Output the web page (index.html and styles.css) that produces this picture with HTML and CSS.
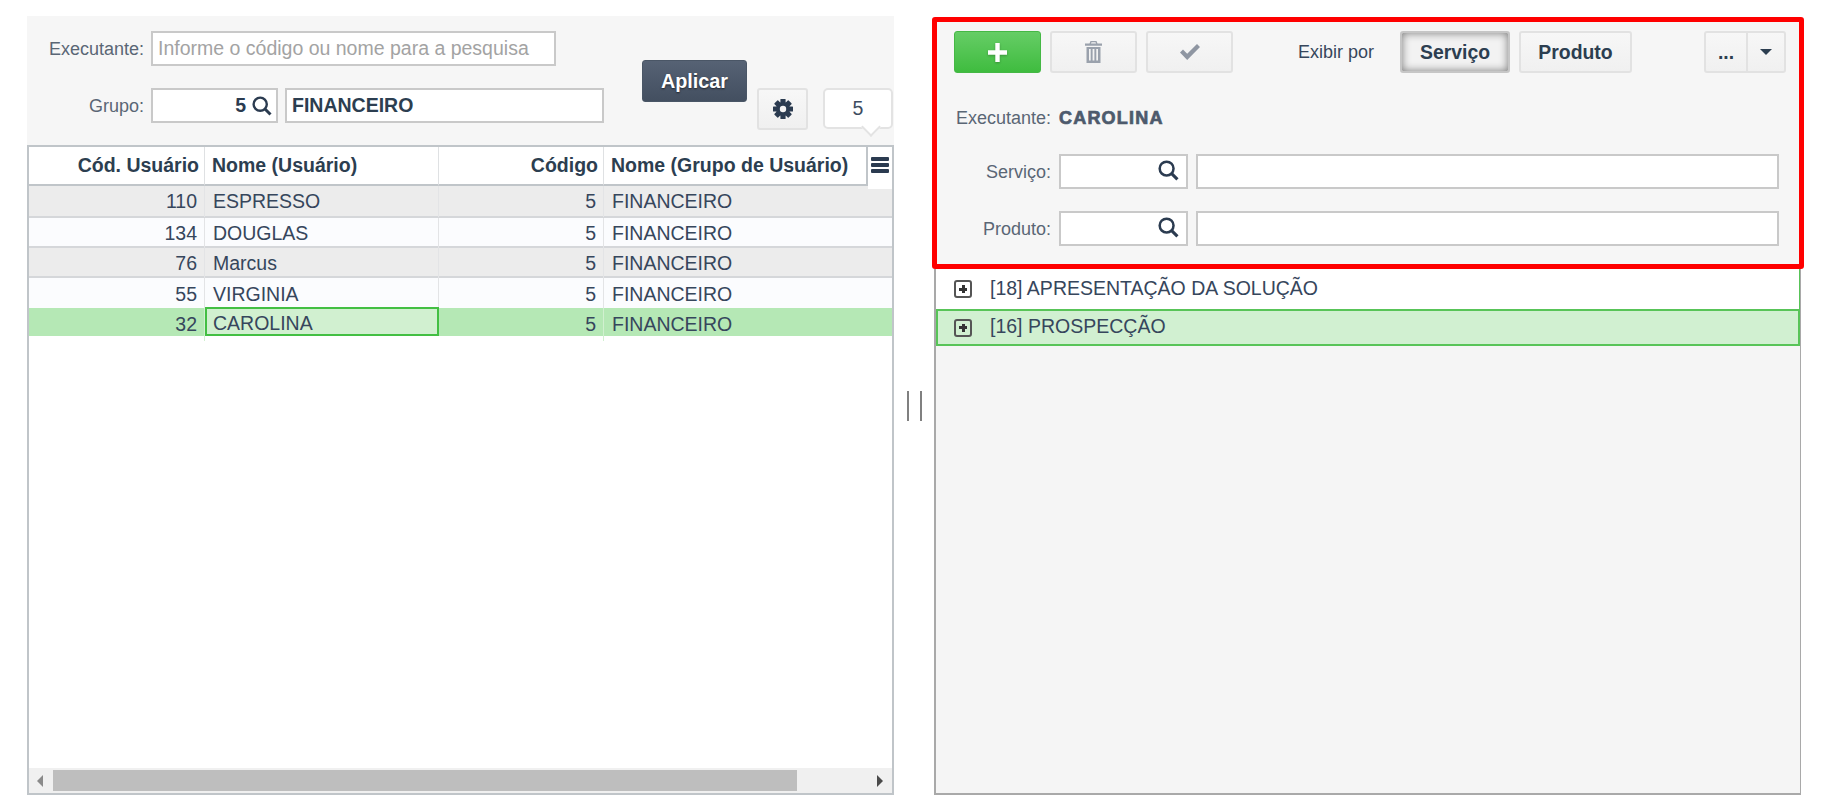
FILE: index.html
```html
<!DOCTYPE html>
<html lang="pt-BR">
<head>
<meta charset="utf-8">
<title>Executantes</title>
<link rel="stylesheet" href="styles.css">
</head>
<body>
<svg class="defs" width="0" height="0" aria-hidden="true">
  <symbol id="search" viewBox="0 0 20 20"><circle cx="8.2" cy="8.2" r="6.6" fill="none" stroke="currentColor" stroke-width="2.4"/><path d="M13 13l5.500 5.500" fill="none" stroke="currentColor" stroke-width="3"/></symbol>
</svg>
<div class="page">
  <section class="left">
    <div class="filters">
      <div class="fields">
        <div class="field">
          <label class="label">Executante:</label>
          <input class="input input-wide" placeholder="Informe o código ou nome para a pesquisa">
        </div>
        <div class="field">
          <label class="label">Grupo:</label>
          <div class="lookup lookup-group">
            <span class="lookup-value">5</span>
            <svg class="icon-search"><use href="#search"/></svg>
          </div>
          <input class="input input-name" value="FINANCEIRO">
        </div>
      </div>
      <button class="btn-apply">Aplicar</button>
      <button class="btn btn-gear" aria-label="Configurar">
        <svg width="22" height="22" viewBox="0 0 22 22">
          <g fill="#2b3b50">
            <rect x="8.400" y="1" width="5.200" height="20" rx=".6"/>
            <rect x="8.400" y="1" width="5.200" height="20" rx=".6" transform="rotate(45 11 11)"/>
            <rect x="8.400" y="1" width="5.200" height="20" rx=".6" transform="rotate(90 11 11)"/>
            <rect x="8.400" y="1" width="5.200" height="20" rx=".6" transform="rotate(135 11 11)"/>
            <circle cx="11" cy="11" r="7"/>
          </g>
          <circle cx="11" cy="11" r="3.200" fill="#f3f3f3"/>
        </svg>
      </button>
      <div class="bubble">5</div>
    </div>
    <div class="grid">
      <div class="grid-head">
        <div class="hcell hcell-num">Cód. Usuário</div>
        <div class="hcell">Nome (Usuário)</div>
        <div class="hcell hcell-num">Código</div>
        <div class="hcell hcell-last">Nome (Grupo de Usuário)</div>
        <div class="grid-menu"><span></span><span></span><span></span></div>
      </div>
      <div class="row row-odd row-first">
        <div class="cell cell-num">110</div><div class="cell">ESPRESSO</div><div class="cell cell-num">5</div><div class="cell cell-last">FINANCEIRO</div>
      </div>
      <div class="row row-even">
        <div class="cell cell-num">134</div><div class="cell">DOUGLAS</div><div class="cell cell-num">5</div><div class="cell cell-last">FINANCEIRO</div>
      </div>
      <div class="row row-odd">
        <div class="cell cell-num">76</div><div class="cell">Marcus</div><div class="cell cell-num">5</div><div class="cell cell-last">FINANCEIRO</div>
      </div>
      <div class="row row-even row-noline">
        <div class="cell cell-num">55</div><div class="cell">VIRGINIA</div><div class="cell cell-num">5</div><div class="cell cell-last">FINANCEIRO</div>
      </div>
      <div class="row row-selected">
        <div class="cell cell-num">32</div><div class="cell cell-focus">CAROLINA</div><div class="cell cell-num">5</div><div class="cell cell-last">FINANCEIRO</div>
      </div>
      <div class="scrollbar">
        <div class="scroll-btn"><i class="arrow-left"></i></div>
        <div class="scroll-thumb"></div>
        <div class="scroll-track"><i class="arrow-right"></i></div>
      </div>
    </div>
  </section>

  <div class="splitter"><i></i><i></i></div>

  <section class="right">
    <div class="panel">
      <div class="toolbar">
        <button class="btn btn-add" aria-label="Adicionar">
          <svg width="19" height="19" viewBox="0 0 19 19"><path d="M7.300 0h4.400v7.300H19v4.400h-7.300V19H7.300v-7.300H0V7.300h7.300z" fill="#fff"/></svg>
        </button>
        <button class="btn btn-tool" aria-label="Excluir">
          <svg width="17" height="22" viewBox="0 0 17 22">
            <path fill="#9aa1ac" d="M5.500 0h6l1 2.500H17v2.200H0V2.500h4.500zM6.500 1.200l-.5 1.300h5l-.5-1.300zM1.500 6h14v16h-14zM4 8v11.500h1.700V8zM7.600 8v11.500h1.800V8zM11.300 8v11.500H13V8z" fill-rule="evenodd"/>
          </svg>
        </button>
        <button class="btn btn-tool" aria-label="Confirmar">
          <svg width="20" height="16" viewBox="0 0 20 16"><path d="M0 8.500l3-3 4.200 4.200L17 0l3 3L7.200 16z" fill="#8f96a2"/></svg>
        </button>
        <span class="view-label">Exibir por</span>
        <button class="btn btn-text btn-active">Serviço</button>
        <button class="btn btn-text btn-product">Produto</button>
        <div class="split">
          <button class="split-main">...</button>
          <button class="split-caret" aria-label="Mais"><i class="caret"></i></button>
        </div>
      </div>
      <div class="form-row form-exec">
        <label class="form-label">Executante:</label>
        <strong class="exec-name">CAROLINA</strong>
      </div>
      <div class="form-row">
        <label class="form-label">Serviço:</label>
        <div class="lookup lookup-form"><svg class="icon-search"><use href="#search"/></svg></div>
        <input class="input input-fill">
      </div>
      <div class="form-row form-row-next">
        <label class="form-label">Produto:</label>
        <div class="lookup lookup-form"><svg class="icon-search"><use href="#search"/></svg></div>
        <input class="input input-fill">
      </div>
    </div>
    <div class="tree">
      <div class="tree-row">
        <span class="expander"></span><span class="tree-text">[18] APRESENTAÇÃO DA SOLUÇÃO</span>
      </div>
      <div class="tree-row tree-row-selected">
        <span class="expander"></span><span class="tree-text">[16] PROSPECÇÃO</span>
      </div>
    </div>
  </section>
</div>
</body>
</html>
```
FILE: styles.css
```css
* { box-sizing: border-box; }
html, body { margin: 0; height: 100%; background: #fff; overflow: hidden; }
body { font-family: "Liberation Sans", Arial, sans-serif; font-size: 19.5px; color: #36465c; }
.defs { position: absolute; }
button { font-family: inherit; padding: 0; cursor: pointer; }

.page { display: flex; padding: 16px 0 0 27px; height: 810px; }
.left { width: 867px; height: 779px; display: flex; flex-direction: column; }
.right { width: 872px; height: 778px; margin-top: 1px; display: flex; flex-direction: column; }

/* filters */
.filters { height: 129px; flex: none; background: #f6f6f6; display: flex; align-items: flex-start; }
.fields { padding-top: 15px; display: flex; flex-direction: column; gap: 22px; }
.field { display: flex; align-items: center; }
.label { width: 117px; margin: 2px 7px 0 0; text-align: right; font-size: 18px; color: #5a6675; }
.input { height: 35px; border: 2px solid #c9c9c9; background: #fff; padding: 0 5px; font: inherit; color: inherit; outline: none; border-radius: 0; }
.input::placeholder { color: #a3a3a3; opacity: 1; }
.input-wide { width: 405px; }
.input-name { width: 319px; margin-left: 7px; font-weight: bold; font-size: 19.5px; color: #2c3e50; }
.lookup { height: 35px; border: 2px solid #c9c9c9; background: #fff; display: flex; align-items: center; justify-content: flex-end; color: #2b3b50; }
.lookup-group { width: 127px; padding-right: 4px; }
.lookup-value { font-weight: bold; font-size: 19.5px; margin-right: 6px; }
.lookup-form { width: 129px; padding-right: 7px; flex: none; }
.icon-search { width: 20px; height: 20px; display: block; }
.lookup-form .icon-search { width: 21px; height: 21px; margin-top: -2px; }

.btn-apply { margin: 44px 0 0 38px; width: 105px; height: 42px; border: 1px solid #4a5666; border-radius: 3px; background: linear-gradient(#566274, #434f60); color: #fff; font-weight: bold; font-size: 19.8px; text-shadow: 0 1px 2px rgba(0,0,0,.6); }
.btn { height: 42px; border: 2px solid #e2e2e2; border-radius: 3px; background: linear-gradient(#f7f7f7, #f0f0f0); display: flex; align-items: center; justify-content: center; flex: none; }
.btn-gear { margin: 72px 0 0 10px; width: 51px; }
.bubble { position: relative; margin: 72px 0 0 15px; width: 70px; height: 41px; background: #fff; border: 2px solid #e3e3e3; border-radius: 5px; text-align: center; line-height: 37px; color: #3d4c60; }
.bubble::after { content: ""; position: absolute; left: 39px; bottom: -7px; width: 12px; height: 12px; background: #fff; border-right: 2px solid #e3e3e3; border-bottom: 2px solid #e3e3e3; transform: rotate(45deg); }

/* data grid */
.grid { flex: 1; border: 2px solid #c0c5c9; display: flex; flex-direction: column; background: #fff; }
.grid-head { position: relative; height: 39px; flex: none; display: grid; grid-template-columns: 176px 234px 165px 264px; background: #fff; }
.hcell { height: 39px; border-bottom: 2px solid #c0c5c9; border-right: 1px solid #dfe1e3; padding-left: 7px; font-weight: bold; color: #2c3e50; line-height: 37px; white-space: nowrap; }
.hcell-num { text-align: right; padding: 0 5px 0 0; }
.hcell-last { border-right: 2px solid #c0c5c9; }
.grid-menu { position: absolute; z-index: 1; right: 0; top: 0; width: 24px; height: 42px; background: #fff; padding: 10px 3px 0; }
.grid-menu span { display: block; height: 4px; margin-bottom: 2px; background: #2b3b50; border-radius: 1px; }

.row { height: 30px; flex: none; display: grid; grid-template-columns: 176px 234px 165px 1fr; border-bottom: 2px solid #d5d7da; }
.row-first { height: 32px; }
.row-noline { border-bottom: 0; }
.row-odd { background: #ececec; }
.row-even { background: #fbfcfe; }
.row-selected { height: 28px; border-bottom: 0; background: #b5e8b5; }
.row-noline .cell { line-height: 32px; }
.cell { padding-left: 8px; line-height: 31px; border-right: 1px solid #e3e4e6; white-space: nowrap; }
.cell-num { text-align: right; padding: 0 7px 0 0; }
.cell-last { border-right: 0; }
.row-selected .cell { border-right-color: #d1f0d0; line-height: 33px; }
.row-selected .cell-last { border-right: 0; }
.row-selected .cell.cell-focus { margin-top: -1px; height: 29px; padding-left: 6px; border: 2px solid #43bf43; background: #d1f0d0; line-height: 29px; }

.scrollbar { margin-top: auto; height: 25px; flex: none; background: #f0f0f0; display: flex; padding: 2px 0; }
.scroll-btn { width: 24px; display: flex; align-items: center; padding-left: 8px; }
.scroll-thumb { width: 744px; background: #bebebe; }
.scroll-track { flex: 1; display: flex; align-items: center; justify-content: flex-end; padding-right: 9px; }
.arrow-left { border: 6px solid transparent; border-left: 0; border-right: 6px solid #8a8a8a; }
.arrow-right { border: 6px solid transparent; border-right: 0; border-left: 6px solid #4a4a4a; }

/* splitter */
.splitter { width: 38px; height: 779px; padding-left: 3px; display: flex; align-items: center; justify-content: center; gap: 11px; }
.splitter i { display: block; width: 2px; height: 30px; background: #808080; }

/* right panel */
.panel { flex: none; height: 252px; border: 5px solid #f00; border-radius: 3px; background: #f6f6f6; padding: 9px 20px 0 17px; }
.toolbar { display: flex; align-items: center; height: 42px; margin-right: -7px; }
.btn-add { width: 87px; border: 1px solid #45b845; background: linear-gradient(#66cd66, #3fbc3f); }
.btn-add svg { filter: drop-shadow(0 1px 1px rgba(0,0,0,.25)); }
.btn-tool { width: 87px; margin-left: 9px; }
.view-label { margin-left: 65px; width: 75px; font-size: 18px; color: #36465c; white-space: nowrap; }
.btn-text { font-weight: bold; font-size: 19.4px; color: #2c3e50; }
.btn-active { margin-left: 27px; width: 110px; border-color: #c6c6c6; background: #f2f2f2; box-shadow: inset 0 0 9px rgba(0,0,0,.5); }
.btn-product { margin-left: 9px; width: 113px; }
.split { margin-left: auto; display: flex; height: 42px; width: 82px; border: 2px solid #e2e2e2; border-radius: 3px; background: linear-gradient(#f7f7f7, #f0f0f0); }
.split-main { width: 42px; border: 0; background: none; border-right: 2px solid #e2e2e2; font-weight: bold; font-size: 19.4px; color: #2c3e50; }
.split-caret { flex: 1; border: 0; background: none; display: flex; align-items: center; justify-content: center; }
.caret { border: 6px solid transparent; border-bottom: 0; border-top: 6px solid #2c3e50; }

.form-row { display: flex; align-items: center; height: 35px; margin-top: 19px; }
.form-exec { margin-top: 27px; padding-top: 2px; }
.form-row-next { margin-top: 22px; }
.form-label { width: 97px; margin-right: 8px; padding-top: 2px; text-align: right; font-size: 18px; color: #5a6675; flex: none; }
.form-exec .form-label { padding-top: 0; }
.exec-name { font-size: 18px; letter-spacing: 1.200px; color: #4d5a6c; -webkit-text-stroke: .7px #4d5a6c; }
.input-fill { flex: 1; min-width: 0; margin-left: 8px; }

/* tree */
.tree { flex: 1; margin: 0 3px 0 2px; border: 2px solid #a9a9a9; border-top: 0; border-right-width: 1px; background: #f5f5f5; }
.tree-row { height: 40px; background: #fff; display: flex; align-items: center; padding-left: 18px; border-right: 1px solid #58c458; white-space: nowrap; }
.tree-row-selected { height: 37px; background: #d1f0d1; border: 2px solid #58c458; padding-left: 16px; }
.tree-text { margin-top: -2px; }
.expander { position: relative; width: 18px; height: 18px; margin-right: 18px; border: 2px solid #555; border-radius: 3px; background: #fff; flex: none; }
.tree-row-selected .expander { background: #d1f0d1; }
.expander::before { content: ""; position: absolute; left: 3px; top: 5.500px; width: 8px; height: 3px; background: #333; }
.expander::after { content: ""; position: absolute; left: 5.500px; top: 3px; width: 3px; height: 8px; background: #333; }
```
